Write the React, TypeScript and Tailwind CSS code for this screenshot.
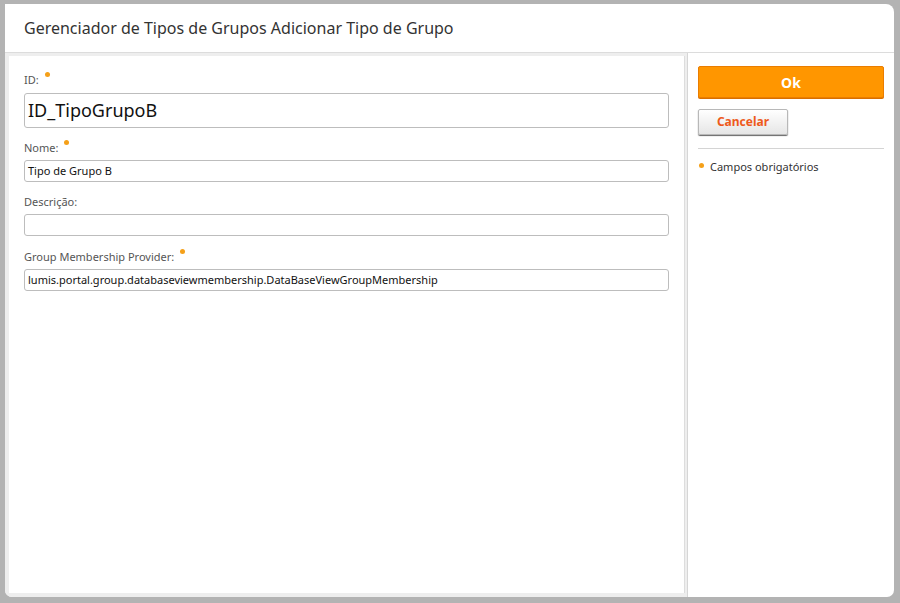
const font = { fontFamily: '"Noto Sans", "Open Sans", sans-serif' };

function Req() {
  return <span className="ml-[6px] inline-block h-[5px] w-[5px] -translate-y-[6px] rounded-full bg-[#f5a019]" />;
}

function Field({
  label,
  value,
  required,
  big,
  className,
}: {
  label: string;
  value: string;
  required?: boolean;
  big?: boolean;
  className?: string;
}) {
  return (
    <div className={className}>
      <div className="flex h-[16px] items-center text-[11px] leading-[16px] text-[#555]">
        <span>{label}</span>
        {required ? <Req /> : null}
      </div>
      <div
        className={
          big
            ? "mt-[5px] flex h-[35px] items-center rounded-[3px] border border-[#bdbdbd] px-[3px] text-[18px] text-[#111]"
            : "mt-[4px] flex h-[22px] items-center rounded-[3px] border border-[#bdbdbd] px-[3px] text-[11px] text-[#111]"
        }
      >
        {value}
      </div>
    </div>
  );
}

export default function App() {
  return (
    <div className="flex h-[603px] w-[900px] flex-col bg-[#b3b3b3] pb-[6px] pl-[5px] pr-[6px] pt-[4px]" style={font}>
      <div className="flex flex-1 flex-col overflow-hidden rounded-b-[7px] rounded-tr-[8px] bg-white">
        <div className="flex h-[49px] shrink-0 items-center border-b border-[#dcdcdc] px-[19px] text-[16px] text-[#333]">
          Gerenciador de Tipos de Grupos Adicionar Tipo de Grupo
        </div>
        <div className="flex flex-1">
          <div className="flex w-[682px] bg-[#eeeeee] pb-[4px] pl-[4px] pr-[2px] pt-[3px]">
            <div className="flex-1 border-r border-[#dddddd] bg-white pl-[15px] pr-[15px] pt-[16px]">
              <Field label="ID:" value="ID_TipoGrupoB" required big />
              <Field className="mt-[12px]" label="Nome:" value="Tipo de Grupo B" required />
              <Field className="mt-[12px]" label="Descrição:" value="" />
              <Field
                className="mt-[13px]"
                label="Group Membership Provider:"
                value="lumis.portal.group.databaseviewmembership.DataBaseViewGroupMembership"
                required
              />
            </div>
          </div>
          <div className="flex flex-1 flex-col border-l border-[#d6d6d6] pl-[10px] pr-[10px] pt-[13px]">
            <button
              type="button"
              className="h-[32px] w-full rounded-[2px] border border-[#ea7d00] bg-[#ff9600] text-[14px] font-bold text-white shadow-[0_1px_0_#d86f00]"
            >
              Ok
            </button>
            <button
              type="button"
              className="mt-[11px] h-[26px] w-[90px] rounded-[2px] border border-[#b8b8b8] bg-gradient-to-b from-white to-[#e6e6e6] text-[12px] font-bold text-[#ee5a1c] shadow-[0_1px_1px_#666]"
            >
              Cancelar
            </button>
            <div className="mt-[13px] border-t border-[#d4d4d4]" />
            <div className="mt-[10px] flex items-center text-[11px] text-[#333]">
              <span className="ml-[1px] inline-block h-[5px] w-[5px] -translate-y-[2px] rounded-full bg-[#f5a019]" />
              <span className="ml-[6px]">Campos obrigatórios</span>
            </div>
          </div>
        </div>
      </div>
    </div>
  );
}
